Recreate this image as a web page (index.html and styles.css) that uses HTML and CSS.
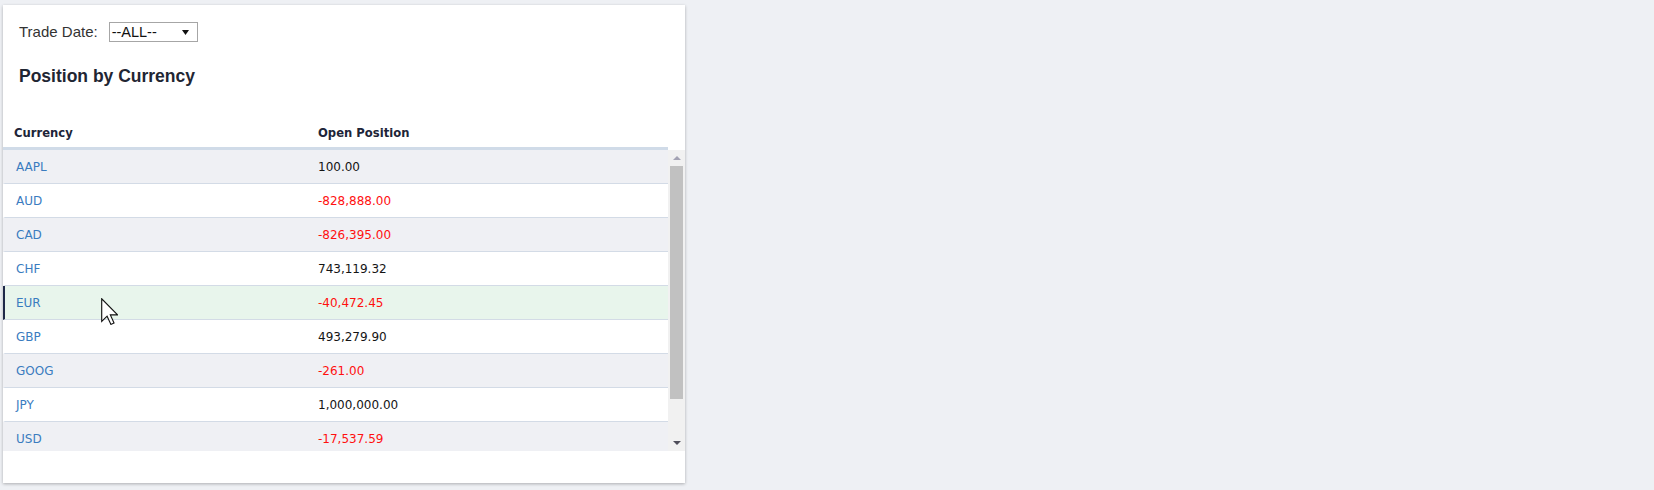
FILE: index.html
```html
<!DOCTYPE html>
<html>
<head>
<meta charset="utf-8">
<link rel="stylesheet" href="styles.css">
</head>
<body>
<div class="card">
  <div class="filter">
    <span class="filter-label">Trade Date:</span>
    <div class="select">
      <span class="select-value">--ALL--</span>
      <svg class="select-arrow" width="7" height="5" viewBox="0 0 7 5"><path d="M0 0H7L3.5 5Z" fill="#111"/></svg>
    </div>
  </div>
  <h2 class="title">Position by Currency</h2>
  <div class="grid-head">
    <div class="hcell col-cur">Currency</div>
    <div class="hcell col-pos">Open Position</div>
  </div>
  <div class="grid-body">
    <div class="rows">
      <div class="row alt"><div class="cell cur">AAPL</div><div class="cell pos">100.00</div></div>
      <div class="row"><div class="cell cur">AUD</div><div class="cell pos neg">-828,888.00</div></div>
      <div class="row alt"><div class="cell cur">CAD</div><div class="cell pos neg">-826,395.00</div></div>
      <div class="row"><div class="cell cur">CHF</div><div class="cell pos">743,119.32</div></div>
      <div class="row hover"><div class="cell cur">EUR</div><div class="cell pos neg">-40,472.45</div></div>
      <div class="row"><div class="cell cur">GBP</div><div class="cell pos">493,279.90</div></div>
      <div class="row alt"><div class="cell cur">GOOG</div><div class="cell pos neg">-261.00</div></div>
      <div class="row"><div class="cell cur">JPY</div><div class="cell pos">1,000,000.00</div></div>
      <div class="row alt"><div class="cell cur">USD</div><div class="cell pos neg">-17,537.59</div></div>
    </div>
    <div class="scrollbar">
      <div class="sb-btn sb-up"><svg width="8" height="4" viewBox="0 0 8 4"><path d="M0 4H8L4 0Z" fill="#a4a3b4"/></svg></div>
      <div class="sb-track"><div class="sb-thumb"></div></div>
      <div class="sb-btn sb-down"><svg width="8" height="4" viewBox="0 0 8 4"><path d="M0 0H8L4 4Z" fill="#4f4e5a"/></svg></div>
    </div>
  </div>
</div>
<svg class="cursor" width="17" height="27" viewBox="0 0 12 19">
  <path d="M0.5 0.5V16.5L4.3 12.8L7 18.6L9.2 17.6L6.6 11.9H11.7Z" fill="#fff" stroke="#111" stroke-width="0.8" stroke-linejoin="miter"/>
</svg>
</body>
</html>
```

FILE: styles.css
```css
html, body {
  margin: 0;
  padding: 0;
}
body {
  background: #eef0f4;
  width: 1654px;
  height: 490px;
  position: relative;
  overflow: hidden;
}
.card {
  margin: 5px 0 0 3px;
  width: 682px;
  height: 478px;
  background: #ffffff;
  box-shadow: 0 1px 3px rgba(0, 0, 0, 0.28);
  display: flex;
  flex-direction: column;
}
.filter {
  display: flex;
  align-items: center;
  padding: 17px 0 0 16px;
  gap: 11px;
  height: 20px;
}
.filter-label {
  font-family: "Liberation Sans", Arial, sans-serif;
  font-size: 15px;
  color: #333333;
  line-height: 20px;
}
.select {
  box-sizing: border-box;
  width: 89px;
  height: 20px;
  border: 1px solid #a6a6a6;
  display: flex;
  align-items: center;
  justify-content: space-between;
  padding: 0 8px 0 2px;
  background: #fff;
}
.select-value {
  font-family: "Liberation Sans", Arial, sans-serif;
  font-size: 14.5px;
  color: #111;
  line-height: 18px;
}
.select-arrow {
  display: block;
}
.title {
  margin: 24px 0 0 16px;
  font-family: "Liberation Sans", Arial, sans-serif;
  font-size: 17.5px;
  font-weight: bold;
  line-height: 20px;
  color: #1f2633;
}
.grid-head {
  display: flex;
  align-items: flex-end;
  height: 61px;
  box-sizing: content-box;
  margin-right: 17px;
  border-bottom: 3px solid #d0dbe8;
}
.hcell {
  font-family: "DejaVu Sans", Verdana, sans-serif;
  font-size: 11.6px;
  font-weight: bold;
  color: #1d2538;
  line-height: 14px;
  padding: 0 0 7px 11px;
}
.hcell.col-cur {
  width: 293px;
}
.grid-body {
  display: flex;
  height: 301px;
}
.rows {
  flex: 1;
  overflow: hidden;
}
.row {
  display: flex;
  align-items: center;
  height: 33px;
  border-bottom: 1px solid #d3dbe6;
  border-left: 2px solid transparent;
  background: #ffffff;
}
.row.alt {
  background: #eff0f4;
}
.row.hover {
  background: #e8f5ec;
  border-left-color: #1f2848;
}
.cell {
  font-family: "DejaVu Sans", Verdana, sans-serif;
  font-size: 12px;
  line-height: 14px;
  padding-left: 11px;
}
.cell.cur {
  width: 291px;
  color: #3a7cbf;
}
.cell.pos {
  color: #141414;
}
.cell.pos.neg {
  color: #ff1010;
}
.scrollbar {
  width: 17px;
  background: #f1f1f1;
  display: flex;
  flex-direction: column;
}
.sb-btn {
  height: 16px;
  display: flex;
  align-items: center;
  justify-content: center;
}
.sb-btn svg {
  display: block;
}
.sb-down {
  height: 17px;
}
.sb-track {
  flex: 1;
  padding: 0 2px;
}
.sb-thumb {
  height: 233px;
  background: #c1c1c1;
}
.cursor {
  position: absolute;
  left: 101px;
  top: 298px;
  display: block;
}
```
